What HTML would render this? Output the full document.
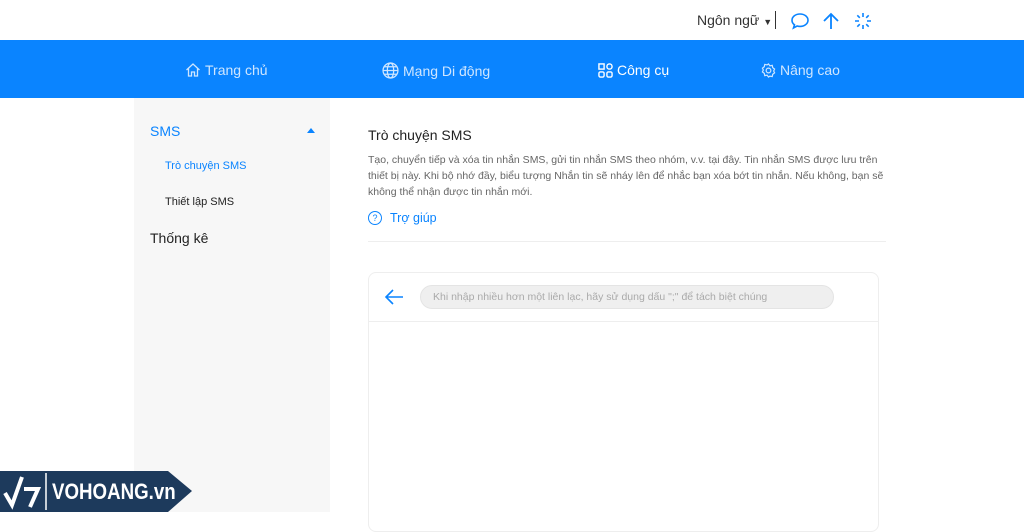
<!DOCTYPE html>
<html><head><meta charset="utf-8"><style>
*{margin:0;padding:0;box-sizing:border-box}
body{width:1024px;height:512px;overflow:hidden;background:#fff;font-family:"Liberation Sans",Arial,sans-serif;position:relative}
.abs{position:absolute;white-space:nowrap}
.nav{position:absolute;left:0;top:40px;width:1024px;height:58px;background:#0a84ff}
.nav .it{position:absolute;top:22px;font-size:14px;color:#cfe6ff;display:flex;align-items:center;gap:4px}
.side{position:absolute;left:134px;top:98px;width:196px;height:414px;background:#f7f7f7}
</style></head><body>
<div class="abs" style="left:697px;top:12px;font-size:14px;color:#333">Ngôn ngữ <span style="font-size:9px">▼</span></div>
<div class="abs" style="left:775px;top:11px;width:1px;height:18px;background:#333"></div>
<svg class="abs" style="left:790px;top:11px" width="20" height="20" viewBox="0 0 20 20"><path d="M10 3c4.4 0 8 2.7 8 6.2s-3.6 6.2-8 6.2c-1 0-2-.1-2.9-.4L3.5 17l1-3.2C2.9 12.7 2 11 2 9.2 2 5.7 5.6 3 10 3z" fill="none" stroke="#0a84ff" stroke-width="1.6"/></svg>
<svg class="abs" style="left:821px;top:11px" width="20" height="20" viewBox="0 0 20 20"><path d="M10 18V3M3 10l7-7 7 7" fill="none" stroke="#0a84ff" stroke-width="1.8"/></svg>
<svg class="abs" style="left:853px;top:11px" width="20" height="20" viewBox="0 0 20 20" stroke="#0a84ff" stroke-width="1.6"><path d="M10 2v4M10 14v4M2 10h4M14 10h4M4.3 4.3l2.5 2.5M13.2 13.2l2.5 2.5M4.3 15.7l2.5-2.5M13.2 6.8l2.5-2.5"/></svg>
<div class="nav">
<div class="it" style="left:185px"><svg width="16" height="16" viewBox="0 0 16 16" fill="none" stroke="#cfe6ff" stroke-width="1.3"><path d="M1.5 8L8 2l6.5 6M3.5 6.5V14h3v-4h3v4h3V6.5"/></svg>Trang chủ</div>
<div class="it" style="left:382px"><svg width="17" height="17" viewBox="0 0 16 16" fill="none" stroke="#cfe6ff" stroke-width="1.2"><circle cx="8" cy="8" r="7"/><ellipse cx="8" cy="8" rx="3" ry="7"/><path d="M1 8h14M2 4.5h12M2 11.5h12"/></svg>Mạng Di động</div>
<div class="it" style="left:598px;color:#fff"><svg width="15" height="15" viewBox="0 0 16 16" fill="none" stroke="#fff" stroke-width="1.5"><rect x="1" y="1" width="5.5" height="5.5"/><rect x="9.5" y="1" width="5.5" height="5.5" rx="2.7"/><rect x="1" y="9.5" width="5.5" height="5.5" rx="1.5"/><rect x="9.5" y="9.5" width="5.5" height="5.5" rx="1.5"/></svg>Công cụ</div>
<div class="it" style="left:761px"><svg width="15" height="15" viewBox="0 0 16 16" fill="none" stroke="#cfe6ff" stroke-width="1.3"><circle cx="8" cy="8" r="2.5"/><path d="M8 1l1.5 2 2.5-.5.5 2.5 2 1.5-1 2 1 2-2 1.5-.5 2.5-2.5-.5L8 15l-1.5-2-2.5.5-.5-2.5-2-1.5 1-2-1-2 2-1.5.5-2.5 2.5.5z"/></svg>Nâng cao</div>
</div>
<div class="side">
<div class="abs" style="left:16px;top:25px;font-size:14px;color:#0a84ff">SMS</div>
<div class="abs" style="left:173px;top:30px;width:0;height:0;border-left:4px solid transparent;border-right:4px solid transparent;border-bottom:5px solid #0a84ff"></div>
<div class="abs" style="left:31px;top:62px;font-size:11px;color:#0a84ff">Trò chuyện SMS</div>
<div class="abs" style="left:31px;top:98px;font-size:11px;color:#222">Thiết lập SMS</div>
<div class="abs" style="left:16px;top:132px;font-size:14px;color:#222">Thống kê</div>
</div>
<div class="abs" style="left:368px;top:127px;font-size:14px;color:#222">Trò chuyện SMS</div>
<div class="abs" style="left:368px;top:152px;font-size:10.5px;color:#666;line-height:16px;white-space:normal;width:520px">Tạo, chuyển tiếp và xóa tin nhắn SMS, gửi tin nhắn SMS theo nhóm, v.v. tại đây. Tin nhắn SMS được lưu trên thiết bị này. Khi bộ nhớ đầy, biểu tượng Nhắn tin sẽ nháy lên để nhắc bạn xóa bớt tin nhắn. Nếu không, bạn sẽ không thể nhận được tin nhắn mới.</div>
<div class="abs" style="left:368px;top:211px;width:14px;height:14px;border:1.3px solid #0a84ff;border-radius:50%;font-size:9px;color:#0a84ff;text-align:center;line-height:12px">?</div>
<div class="abs" style="left:390px;top:211px;font-size:12.5px;color:#0a84ff">Trợ giúp</div>
<div class="abs" style="left:368px;top:241px;width:518px;height:1px;background:#eee"></div>
<div class="abs" style="left:368px;top:272px;width:511px;height:260px;border:1px solid #eee;border-radius:8px"></div>
<div class="abs" style="left:369px;top:321px;width:509px;height:1px;background:#eee"></div>
<svg class="abs" style="left:384px;top:287px" width="20" height="20" viewBox="0 0 20 20" fill="none" stroke="#0a84ff" stroke-width="1.6"><path d="M19 10H2M9 3l-7 7 7 7"/></svg>
<div class="abs" style="left:420px;top:285px;width:414px;height:24px;background:#efefef;border:1px solid #e4e4e4;border-radius:12px;font-size:10.5px;color:#aaa;padding-left:12px;line-height:22px">Khi nhập nhiều hơn một liên lạc, hãy sử dụng dấu ";" để tách biệt chúng</div>
<svg class="abs" style="left:0;top:471px" width="192" height="41" viewBox="0 0 192 41"><path d="M0 0h168l24 20-24 21H0z" fill="#1d3a5c"/><path d="M46 2v37" stroke="#fff" stroke-width="1.5"/><path d="M5 22l7 12 10-28M24 18h14l-8 18" fill="none" stroke="#fff" stroke-width="4"/></svg>
<div class="abs" style="left:52px;top:479px;font-size:22px;font-weight:bold;color:#fff;letter-spacing:0px;transform:scaleX(0.85);transform-origin:left">VOHOANG.vn</div>
</body></html>
